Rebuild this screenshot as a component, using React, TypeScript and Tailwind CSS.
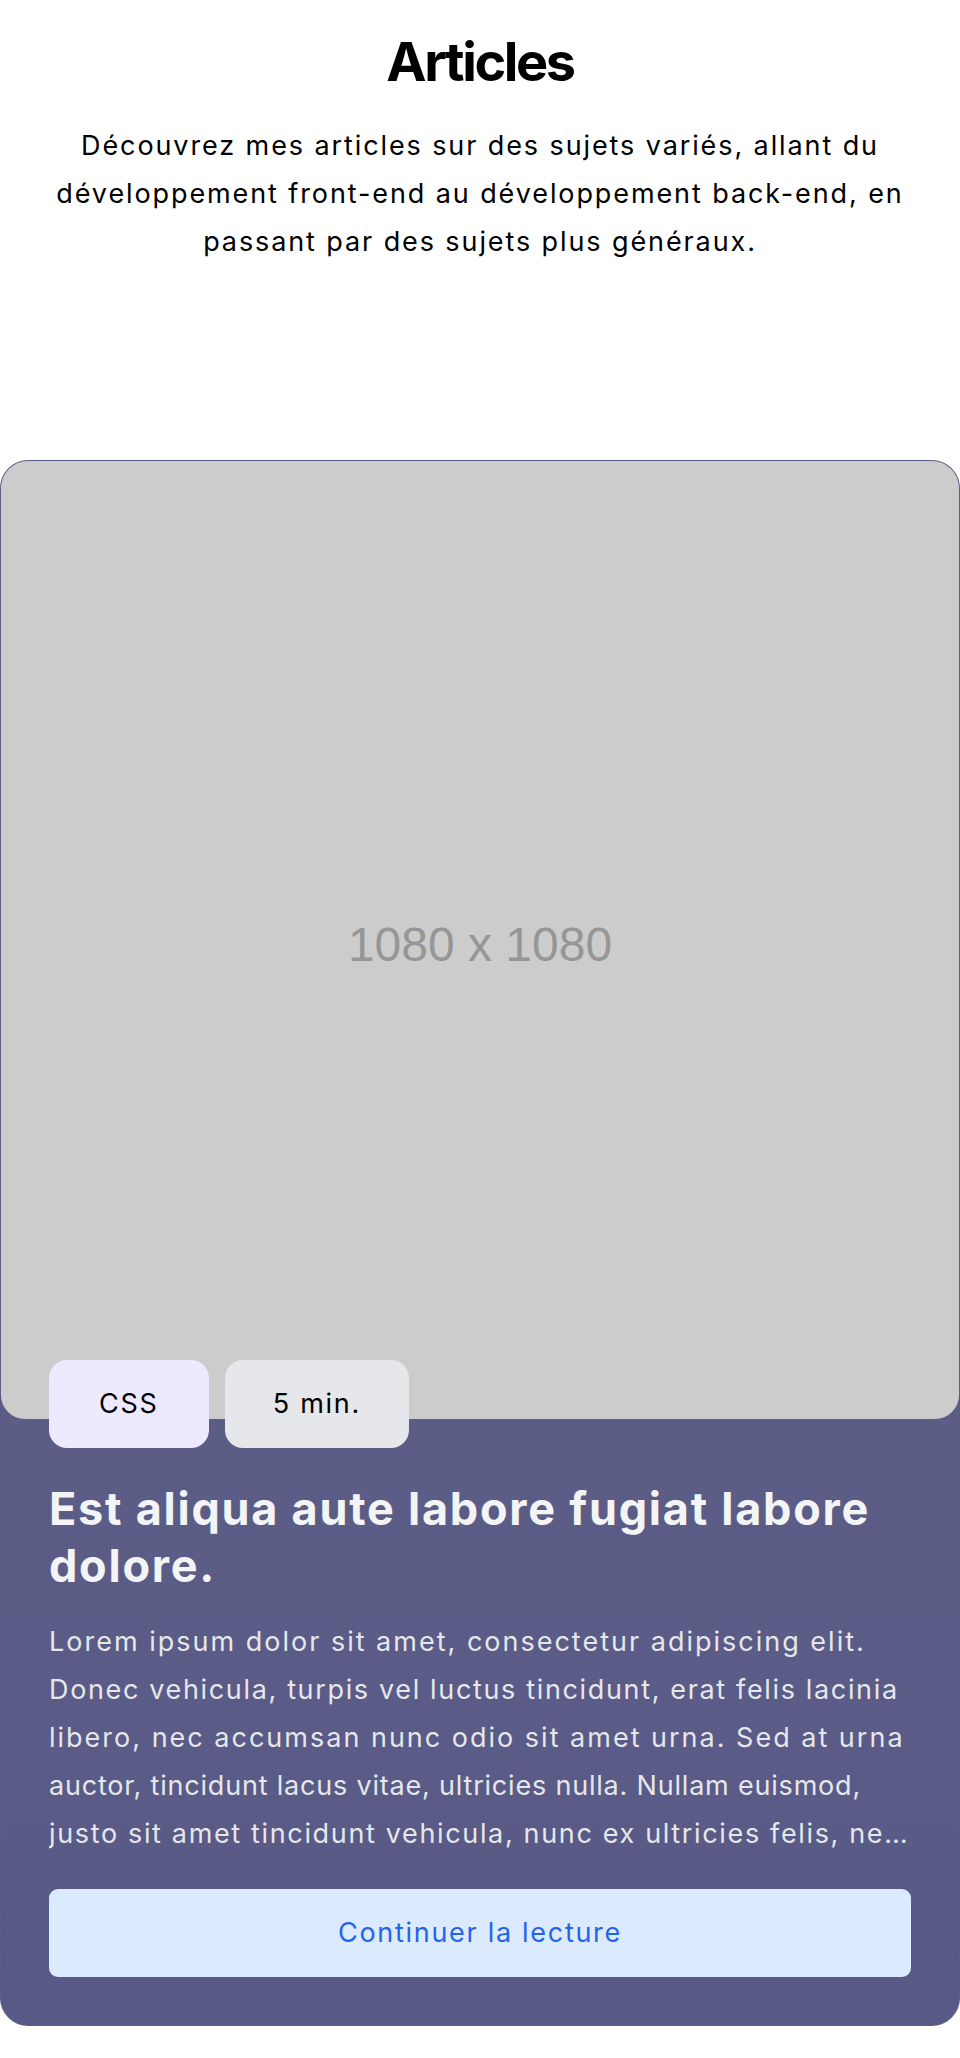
const excerpt: [string, string][] = [
  ["Lorem ipsum dolor sit amet, consectetur adipiscing elit.", "tracking-[2px]"],
  ["Donec vehicula, turpis vel luctus tincidunt, erat felis lacinia", "tracking-[1.65px]"],
  ["libero, nec accumsan nunc odio sit amet urna. Sed at urna", "tracking-[2px]"],
  ["auctor, tincidunt lacus vitae, ultricies nulla. Nullam euismod,", "tracking-[0.8px]"],
  [
    "justo sit amet tincidunt vehicula, nunc ex ultricies felis, nec ultricies nisi nunc vel nunc.",
    "tracking-[1.65px] truncate",
  ],
]

export default function App() {
  return (
    <div className="min-h-screen bg-white font-['Inter',sans-serif] text-black">
      <header className="px-[36px] pt-[32px] text-center">
        <h1 className="text-[54px] leading-[60px] font-bold tracking-[-2.4px]">Articles</h1>
        <p className="mt-[30px] text-[27px] leading-[48px] tracking-[1.9px]">
          Découvrez mes articles sur des sujets variés, allant du développement front-end au
          développement back-end, en passant par des sujets plus généraux.
        </p>
      </header>

      <div className="mt-[194px]">
        <article className="overflow-hidden rounded-[28px] border border-[#5a5b88] bg-gradient-to-b from-[#636484] to-[#585987]">
          <div className="flex aspect-square items-center justify-center rounded-[24px] bg-[#cccccc] pt-[10px]">
            <span className="font-['Liberation_Sans',Arial,sans-serif] text-[48px] text-[#969696]">
              1080 x 1080
            </span>
          </div>

          <div className="px-[48px] pb-[48px]">
            <div className="relative -mt-[59px] flex gap-[16px] text-[27px] leading-[40px] tracking-[1.75px]">
              <span className="rounded-[18px] bg-[#ede9fe] px-[50px] py-[24px]">CSS</span>
              <span className="rounded-[18px] bg-[#e5e7eb] px-[48px] py-[24px]">5 min.</span>
            </div>

            <h2 className="mt-[32px] text-[45px] leading-[57px] font-bold tracking-[1.75px] text-[#f3f4f6]">
              Est aliqua aute labore fugiat labore dolore.
            </h2>
            <p className="mt-[24px] text-[27px] leading-[48px] text-[#e5e7eb]">
              {excerpt.map(([line, cls]) => (
                <span key={line} className={"block whitespace-nowrap " + cls}>
                  {line}
                </span>
              ))}
            </p>

            <button className="mt-[31px] w-full rounded-[9px] bg-[#dbeafe] py-[24px] text-[27px] leading-[40px] tracking-[1.7px] text-[#2563eb]">
              Continuer la lecture
            </button>
          </div>
        </article>
      </div>
    </div>
  )
}
